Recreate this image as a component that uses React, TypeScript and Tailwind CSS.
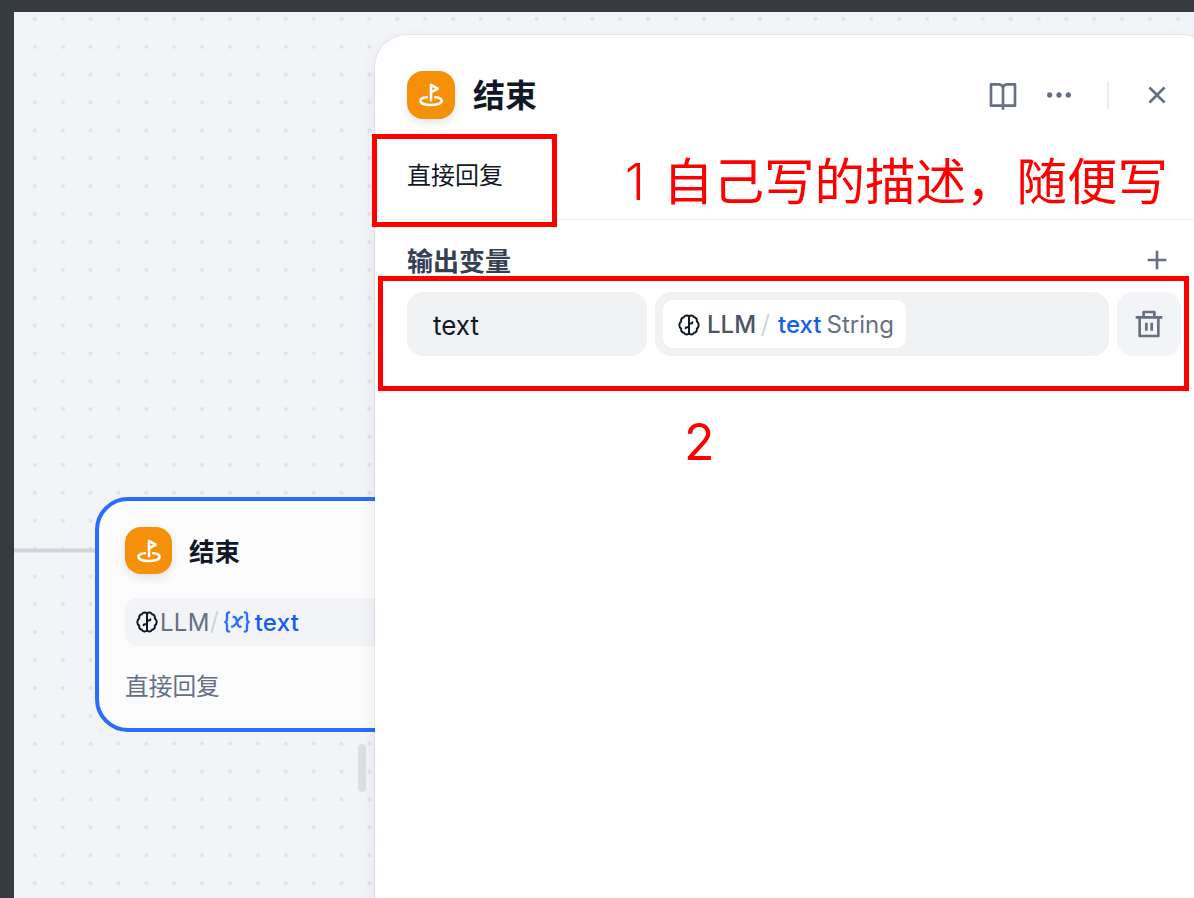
import type { ReactNode } from 'react';
import { RiAddLine, RiBookOpenLine, RiCloseLine, RiDeleteBinLine, RiMoreFill } from 'react-icons/ri';

function EndIcon({ className }: { className?: string }) {
  return (
    <div
      className={`flex shrink-0 items-center justify-center rounded-[16px] bg-[#f79009] shadow-[0_4px_10px_rgba(9,9,11,0.1)] ${className ?? ''}`}
    >
      <svg
        width="28"
        height="28"
        viewBox="0 0 28 28"
        fill="none"
        stroke="white"
        strokeWidth="2.6"
        strokeLinecap="round"
        strokeLinejoin="round"
      >
        <path d="M14 19.2V3.8L20.8 7.6L14 11.4" />
        <path d="M9.8 16.2C5.6 16.6 3.4 18 3.4 19.8C3.4 22.4 8 24 14 24S24.6 22.4 24.6 19.8C24.6 18 22.4 16.6 18.2 16.2" />
      </svg>
    </div>
  );
}

function BrainIcon() {
  return (
    <svg
      width="22"
      height="22"
      viewBox="0 0 22 22"
      className="shrink-0 text-[#101828]"
      fill="none"
      stroke="currentColor"
      strokeWidth="2"
      strokeLinejoin="round"
      strokeLinecap="round"
    >
      <path d="M11 2.4C9.6 1.1 6.9 1.2 6 3.2C3.9 3.5 2.7 5.4 3.2 7.3C0.7 9 0.7 13 3.2 14.7C2.7 16.6 3.9 18.5 6 18.8C6.9 20.8 9.6 20.9 11 19.6" />
      <path d="M11 2.4C12.4 1.1 15.1 1.2 16 3.2C18.1 3.5 19.3 5.4 18.8 7.3C21.3 9 21.3 13 18.8 14.7C19.3 16.6 18.1 18.5 16 18.8C15.1 20.8 12.4 20.9 11 19.6" />
      <path d="M11 2.4V19.6M11 9.4H13.2C14 9.4 14.4 9 14.4 8.2M11 13.2H8.8C8 13.2 7.6 13.6 7.6 14.2" />
    </svg>
  );
}

function VariableIcon() {
  return (
    <svg
      width="26"
      height="22"
      viewBox="0 0 26 22"
      className="shrink-0 text-[#2970ff]"
      fill="none"
      stroke="currentColor"
      strokeWidth="2.3"
      strokeLinecap="round"
      strokeLinejoin="round"
    >
      <path d="M5.2 1.4C3.6 1.4 3 2.4 3 4V7.5C3 9.4 2.4 10.6 1.2 11C2.4 11.4 3 12.6 3 14.5V18C3 19.6 3.6 20.6 5.2 20.6" />
      <path d="M20.8 1.4C22.4 1.4 23 2.4 23 4V7.5C23 9.4 23.6 10.6 24.8 11C23.6 11.4 23 12.6 23 14.5V18C23 19.6 22.4 20.6 20.8 20.6" />
      <path d="M9.6 6C12 5.4 12.2 7.8 13 10.7S14 16.4 16.6 15.6M18.2 6C14.5 5.6 12 16 8 15.6" />
    </svg>
  );
}

function Slash() {
  return (
    <svg width="9" height="24" viewBox="0 0 9 24" className="shrink-0" fill="none" stroke="#d0d5dd" strokeWidth="2">
      <path d="M7.6 1L1.2 23" />
    </svg>
  );
}

function EndNode() {
  return (
    <div className="absolute top-[485px] left-[81px] h-[235px] w-[480px] rounded-[33px] border-4 border-[#296dff] bg-[#fcfcfd] pt-[26px] pl-[26px]">
      <div className="flex items-center">
        <EndIcon className="size-[47px]" />
        <span className="ml-[17px] pt-0.5 text-[25.5px] leading-none font-bold text-[#101828]">结束</span>
      </div>
      <div className="mt-6 flex h-12 items-center rounded-xl bg-[#f2f4f7] pl-[11px] text-[24px]">
        <BrainIcon />
        <span className="ml-0.5 pt-px tracking-[0.3px] text-[#676f83]">LLM</span>
        <Slash />
        <span className="ml-[5px] flex items-center">
          <VariableIcon />
          <span className="ml-[5px] pt-px font-medium tracking-[0.2px] text-[#155eef]">text</span>
        </span>
      </div>
      <p className="mt-6 text-[23.7px] leading-[34px] text-[#676f83]">直接回复</p>
    </div>
  );
}

function PanelHeader() {
  return (
    <div className="h-[185px] border-b border-[#f0f0f1] pt-9 pl-8">
      <div className="flex h-12 items-center text-[#676f83]">
        <EndIcon className="size-12" />
        <h1 className="ml-[18px] pt-0.5 text-[32px] leading-none font-bold text-[#101828]">结束</h1>
        <div className="ml-auto flex items-center pr-[42px]">
          <RiBookOpenLine size={32} />
          <RiMoreFill size={32} className="ml-6" />
          <span className="ml-8 h-7 w-0.5 bg-[#ececee]" />
          <RiCloseLine size={32} className="ml-8" />
        </div>
      </div>
      <p className="mt-10 text-[24px] leading-[34px] text-[#101828]">直接回复</p>
    </div>
  );
}

function OutputVars() {
  return (
    <div className="h-[169px] border-b border-[#f0f0f1] pt-[18px] pl-8">
      <div className="flex h-11 items-center">
        <h2 className="pt-[3px] text-[26px] leading-none font-bold text-[#354052]">输出变量</h2>
        <RiAddLine size={32} className="mr-[42px] ml-auto text-[#676f83]" />
      </div>
      <div className="mt-2.5 flex h-16 gap-2">
        <div className="flex w-60 items-center rounded-2xl bg-[#f1f2f4] pt-0.5 pl-[26px] text-[26px] text-[#101828]">
          text
        </div>
        <div className="flex w-[454px] rounded-2xl bg-[#f1f2f4] p-2">
          <div className="flex h-12 w-[243px] items-center rounded-[10px] bg-white pt-px pl-[15px] text-[24px]">
            <BrainIcon />
            <span className="ml-[7px] font-medium text-[#495464]">LLM</span>
            <span className="ml-[5px] flex">
              <Slash />
            </span>
            <span className="ml-2 font-medium text-[#155eef]">text</span>
            <span className="ml-[5px] text-[#676f83]">String</span>
          </div>
        </div>
        <div className="flex size-16 items-center justify-center rounded-2xl bg-[#f2f4f7] text-[#676f83]">
          <RiDeleteBinLine size={32} />
        </div>
      </div>
    </div>
  );
}

function Marker({ className, children }: { className: string; children?: ReactNode }) {
  return <div className={`absolute ${className}`}>{children}</div>;
}

export default function App() {
  return (
    <div className="relative h-[898px] w-[1194px] overflow-hidden bg-[#363b3f] pt-3 pl-[14px] font-['Inter','Noto_Sans_CJK_SC',sans-serif]">
      <div className="relative h-[886px] w-[1180px] overflow-hidden bg-[#f2f4f7]">
        <svg width="1180" height="886" className="block">
          <defs>
            <pattern id="dots" x="6.9" y="-7.1" width="27.88" height="27.88" patternUnits="userSpaceOnUse">
              <circle cx="13.94" cy="13.94" r="2.1" fill="#e0e2ec" />
            </pattern>
          </defs>
          <rect width="1180" height="886" fill="url(#dots)" />
          <path d="M0 538.5H82" stroke="#d0d5dd" strokeWidth="4" />
        </svg>
        <EndNode />
        <span className="absolute top-[530px] left-[81px] h-4 w-1 bg-[#296dff]" />
        <span className="absolute top-[732px] left-[344px] h-12 w-2 rounded-full bg-[#dddfe3]" />

        <div className="absolute top-[23px] left-[361px] h-[900px] w-[840px] rounded-t-[32px] bg-white shadow-[0_0_0_1px_rgba(16,24,40,0.05),0_8px_20px_rgba(9,9,11,0.07)]">
          <PanelHeader />
          <OutputVars />
        </div>
      </div>

      <Marker className="top-[134px] left-[372px] h-[93px] w-[185px] border-5 border-[#ff0000]" />
      <Marker className="top-[276px] left-[378px] h-[115px] w-[811px] border-5 border-[#ff0000]" />
      <Marker className="top-[152px] left-[625px] flex text-[50.5px] leading-[60px] whitespace-nowrap text-[#ff0000]">
        <span className="w-[38px] font-light">1</span>
        <span>自己写的描述，随便写</span>
      </Marker>
      <Marker className="top-[412px] left-[684px] text-[50px] leading-[60px] text-[#ff0000]">2</Marker>
    </div>
  );
}
